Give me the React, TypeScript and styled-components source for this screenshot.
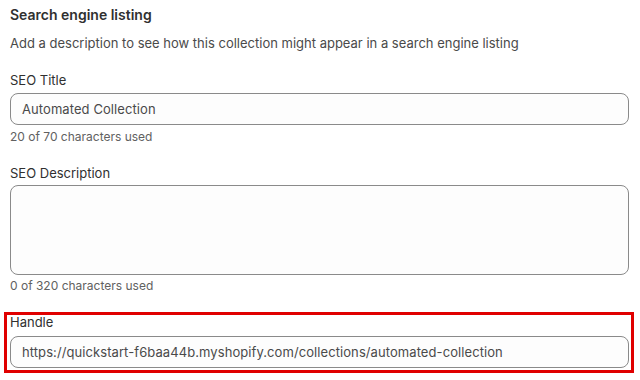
import React from "react";
import styled, { createGlobalStyle } from "styled-components";

const Global = createGlobalStyle`
  html, body { margin: 0; padding: 0; background: #ffffff; }
  body { font-family: Inter, "Noto Sans", "Liberation Sans", sans-serif; color: #303030; }
  * { box-sizing: border-box; }
`;

const Page = styled.div`
  width: 640px;
  height: 380px;
  padding: 5px 11px 0 10px;
  display: flex;
  flex-direction: column;
  overflow: hidden;
`;

const Title = styled.h2`
  margin: 0;
  font-size: 14px;
  line-height: 20px;
  font-weight: 600;
  color: #303030;
`;

const Intro = styled.p`
  margin: 8px 0 0;
  font-size: 13px;
  line-height: 20px;
  color: #4a4a4a;
`;

const Field = styled.div<{ $top: number }>`
  display: flex;
  flex-direction: column;
  margin-top: ${(p) => p.$top}px;
`;

const Label = styled.label<{ $lh?: number }>`
  font-size: 13px;
  line-height: ${(p) => p.$lh ?? 20}px;
  color: #303030;
`;

const Input = styled.div<{ $gap: number; $h: number }>`
  margin-top: ${(p) => p.$gap}px;
  height: ${(p) => p.$h}px;
  border: 1px solid #8a8a8a;
  border-radius: 8px;
  background: #fdfdfd;
  padding: 0 11px;
  display: flex;
  align-items: center;
  font-size: 13px;
  letter-spacing: 0.08px;
  color: #4a4a4a;
  white-space: nowrap;
  overflow: hidden;
`;

const Help = styled.div<{ $gap: number }>`
  margin-top: ${(p) => p.$gap}px;
  font-size: 12px;
  line-height: 20px;
  color: #616161;
`;

const Highlight = styled.div`
  margin: 16px -5px 0 -6px;
  border: 3px solid #e00000;
  padding: 0 2px 2px 3px;
  display: flex;
  flex-direction: column;
`;

export default function App() {
  return (
    <>
      <Global />
      <Page>
        <Title>Search engine listing</Title>
        <Intro>
          Add a description to see how this collection might appear in a search engine listing
        </Intro>
        <Field $top={17}>
          <Label>SEO Title</Label>
          <Input $gap={3} $h={32}>Automated Collection</Input>
          <Help $gap={2}>20 of 70 characters used</Help>
        </Field>
        <Field $top={16}>
          <Label>SEO Description</Label>
          <Input $gap={2} $h={90} />
          <Help $gap={1}>0 of 320 characters used</Help>
        </Field>
        <Highlight>
          <Label $lh={14}>Handle</Label>
          <Input $gap={7} $h={32}>
            https://quickstart-f6baa44b.myshopify.com/collections/automated-collection
          </Input>
        </Highlight>
      </Page>
    </>
  );
}
